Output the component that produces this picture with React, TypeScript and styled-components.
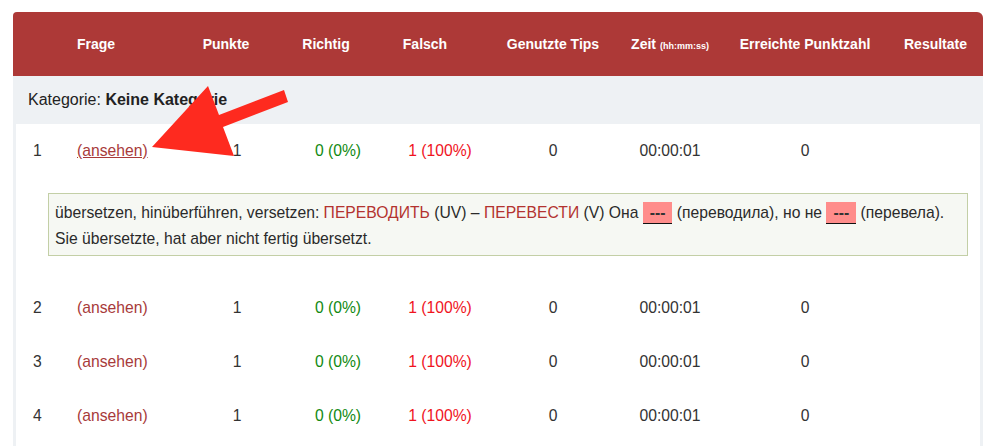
import styled, { createGlobalStyle } from "styled-components";

const GlobalStyle = createGlobalStyle`
  html, body {
    margin: 0;
    padding: 0;
    background: #ffffff;
    overflow: hidden;
  }
  body {
    font-family: "Liberation Sans", Arial, sans-serif;
    color: #333333;
  }
`;

// column widths, relative to the card (970px wide)
const COLUMNS = "47px 130px 94px 108px 96px 130px 104px 166px 95px";
const BODY_COLUMNS = "44px 130px 94px 108px 96px 130px 104px 166px 92px";

const Page = styled.div`
  padding: 12px 11px 0 13px;
  position: relative;
`;

const Card = styled.div`
  background: #eef1f4;
  border-radius: 4px 6px 0 0;
  overflow: hidden;
`;

const HeaderRow = styled.div`
  display: grid;
  grid-template-columns: ${COLUMNS};
  height: 64px;
  align-items: center;
  background: #ad3937;
  color: #ffffff;
  font-weight: bold;
  font-size: 14px;
`;

const HeadCell = styled.div<{ $align?: "left" | "center"; $shift?: number }>`
  text-align: ${(p) => p.$align ?? "center"};
  padding-left: ${(p) => (p.$align === "left" ? "17px" : "0")};
  padding-right: ${(p) => (p.$shift ? `${p.$shift * 2}px` : "0")};
  white-space: nowrap;
`;

const Small = styled.span`
  font-size: 9px;
`;

const CategoryRow = styled.div`
  height: 48px;
  display: flex;
  align-items: center;
  padding-left: 15px;
  font-size: 16px;
  color: #222;
`;

const Body = styled.div`
  margin: 0 3px;
  background: #ffffff;
  padding-bottom: 40px;
`;

const Row = styled.div`
  display: grid;
  grid-template-columns: ${BODY_COLUMNS};
  height: 54px;
  align-items: center;
  font-size: 15.7px;
`;

const Cell = styled.div<{ $align?: "left" | "center"; $color?: string }>`
  text-align: ${(p) => p.$align ?? "center"};
  padding-left: ${(p) => (p.$align === "left" ? "17px" : "0")};
  color: ${(p) => p.$color ?? "#333333"};
  white-space: nowrap;
`;

const NumCell = styled.div`
  padding-left: 17px;
  color: #333333;
`;

const ViewLink = styled.a<{ $active?: boolean }>`
  color: #a83a3a;
  text-decoration: ${(p) => (p.$active ? "underline" : "none")};
  cursor: pointer;
`;

const DetailWrap = styled.div`
  padding: 15px 12px 25px 32px;
`;

const Detail = styled.div`
  border: 1px solid #c3cfa6;
  background: #f6f8f3;
  padding: 6px 6px 3px;
  font-size: 15.7px;
  line-height: 26px;
  color: #2a2a2a;
`;

const Russian = styled.span`
  color: #b3332f;
`;

const Blank = styled.span`
  display: inline-block;
  background: #ff8d8b;
  font-weight: bold;
  line-height: 21px;
  padding: 0 7px;
  border-bottom: 1px solid #111;
  color: #333;
`;

const Arrow = styled.svg`
  position: absolute;
  left: 0;
  top: 0;
  pointer-events: none;
`;

type Result = { nr: number };
const results: Result[] = [{ nr: 1 }, { nr: 2 }, { nr: 3 }, { nr: 4 }];

function ResultRow({ nr, active }: { nr: number; active?: boolean }) {
  return (
    <Row>
      <NumCell>{nr}</NumCell>
      <Cell $align="left">
        <ViewLink $active={active}>(ansehen)</ViewLink>
      </Cell>
      <Cell>1</Cell>
      <Cell $color="#128a12">0 (0%)</Cell>
      <Cell $color="#f0141e">1 (100%)</Cell>
      <Cell>0</Cell>
      <Cell>00:00:01</Cell>
      <Cell>0</Cell>
      <Cell />
    </Row>
  );
}

export default function App() {
  return (
    <>
      <GlobalStyle />
      <Page>
        <Card>
          <HeaderRow>
            <HeadCell />
            <HeadCell $align="left">Frage</HeadCell>
            <HeadCell $shift={11}>Punkte</HeadCell>
            <HeadCell $shift={12}>Richtig</HeadCell>
            <HeadCell $shift={15}>Falsch</HeadCell>
            <HeadCell>Genutzte Tips</HeadCell>
            <HeadCell>
              Zeit <Small>(hh:mm:ss)</Small>
            </HeadCell>
            <HeadCell>Erreichte Punktzahl</HeadCell>
            <HeadCell>Resultate</HeadCell>
          </HeaderRow>
          <CategoryRow>
            Kategorie:&nbsp;<b>Keine Kategorie</b>
          </CategoryRow>
          <Body>
            {results.map((r) => (
              <div key={r.nr}>
                <ResultRow nr={r.nr} active={r.nr === 1} />
                {r.nr === 1 && (
                  <DetailWrap>
                    <Detail>
                      übersetzen, hinüberführen, versetzen:{" "}
                      <Russian>ПЕРЕВОДИТЬ</Russian> (UV) –{" "}
                      <Russian>ПЕРЕВЕСТИ</Russian> (V) Она <Blank>---</Blank>{" "}
                      (переводила), но не <Blank>---</Blank> (перевела).
                      <br />
                      Sie übersetzte, hat aber nicht fertig übersetzt.
                    </Detail>
                  </DetailWrap>
                )}
              </div>
            ))}
          </Body>
        </Card>
        <Arrow width="994" height="446" viewBox="0 0 994 446">
          <polygon
            points="152,147 234,156 223,127 288,102 284,90 219,115 208,86"
            fill="#fe2a1f"
          />
        </Arrow>
      </Page>
    </>
  );
}
